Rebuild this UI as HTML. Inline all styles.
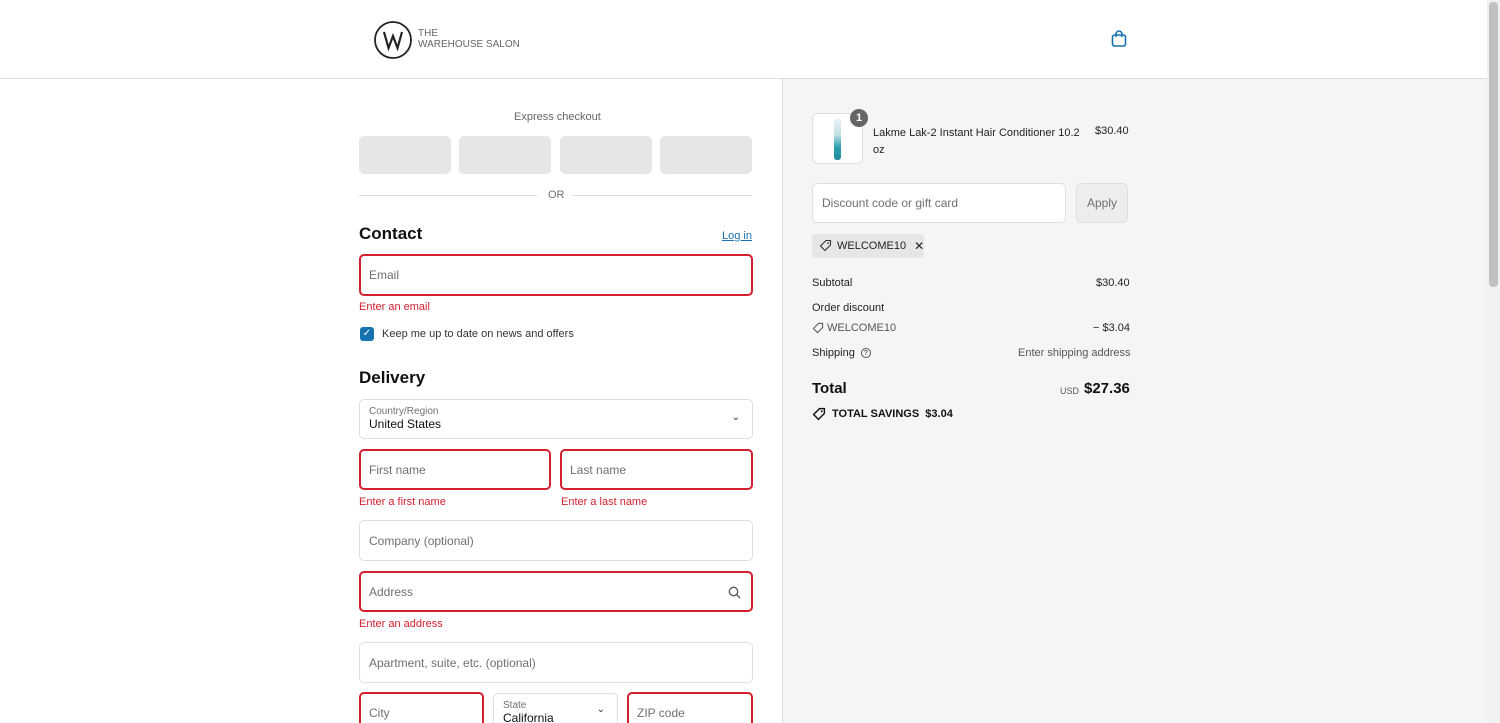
<!DOCTYPE html>
<html><head><meta charset="utf-8"><style>
*{box-sizing:border-box;margin:0;padding:0}
html,body{width:1500px;height:723px;overflow:hidden}
body{font-family:"Liberation Sans",sans-serif;background:#fff;color:#000;position:relative}
.a{position:absolute}
.hdr{left:0;top:0;width:1487px;height:79px;border-bottom:1px solid #dedede;background:#fff}
.right{left:782px;top:79px;width:705px;height:644px;background:#f5f5f5;border-left:1px solid #dedede}
.sb{left:1487px;top:0;width:13px;height:723px;background:#f1f1f1}
.sb div{position:absolute;left:2px;top:2px;width:9px;height:285px;background:#c1c1c1;border-radius:4px}
.in{position:absolute;border:1px solid #dedede;border-radius:5px;background:#fff;font-size:12px;color:#707070;padding-left:9px;display:flex;align-items:center;white-space:nowrap}
.err{border:2px solid #d2202f;padding-left:8px}
.em{position:absolute;font-size:11px;color:#d2202f}
.ex{position:absolute;top:136px;width:92px;height:38px;background:#e6e6e6;border-radius:5px}
.t{position:absolute;font-size:11px;color:#333;white-space:nowrap}
</style></head><body>
<div class="a hdr">
 <svg class="a" style="left:373px;top:20px" width="40" height="40" viewBox="0 0 40 40"><circle cx="20" cy="20" r="18" fill="none" stroke="#222" stroke-width="1.8"/><path d="M11 12 L15.5 28 L20 16 L24.5 28 L29 12" fill="none" stroke="#222" stroke-width="2.2"/></svg>
 <div class="a" style="left:418px;top:28px;font-size:10px;color:#666;line-height:11px">THE<br>WAREHOUSE SALON</div>
 <svg class="a" style="left:1110px;top:30px" width="18" height="18" viewBox="0 0 18 18"><rect x="2.5" y="5" width="13" height="11" rx="2" fill="none" stroke="#1773b0" stroke-width="1.6"/><path d="M6 7V4a3 3 0 016 0v3" fill="none" stroke="#1773b0" stroke-width="1.6"/></svg>
</div>
<div class="a right"></div>
<div class="a sb"><div></div></div>

<div class="t" style="left:514px;top:111px;color:#666">Express checkout</div>
<div class="ex" style="left:359px"></div><div class="ex" style="left:459px"></div><div class="ex" style="left:560px"></div><div class="ex" style="left:660px"></div>
<div class="a" style="left:359px;top:195px;width:178px;height:1px;background:#dedede"></div>
<div class="a" style="left:573px;top:195px;width:179px;height:1px;background:#dedede"></div>
<div class="t" style="left:548px;top:189px;color:#707070">OR</div>

<div class="a" style="left:359px;top:224px;font-size:17px;font-weight:bold;color:#111">Contact</div>
<div class="a" style="left:722px;top:230px;font-size:11px;color:#1773b0;text-decoration:underline">Log in</div>
<div class="in err" style="left:359px;top:254px;width:394px;height:42px">Email</div>
<div class="em" style="left:359px;top:301px">Enter an email</div>
<div class="a" style="left:360px;top:327px;width:14px;height:14px;background:#1773b0;border-radius:3px;color:#fff;font-size:10px;text-align:center;line-height:14px">✓</div>
<div class="t" style="left:382px;top:328px">Keep me up to date on news and offers</div>

<div class="a" style="left:359px;top:368px;font-size:17px;font-weight:bold;color:#111">Delivery</div>
<div class="in" style="left:359px;top:399px;width:394px;height:40px;display:block;padding-top:6px">
 <div style="font-size:10px;color:#707070">Country/Region</div><div style="font-size:12px;color:#111">United States</div>
 <div style="position:absolute;right:12px;top:12px;font-size:10px;color:#333">⌄</div></div>
<div class="in err" style="left:359px;top:449px;width:192px;height:41px">First name</div>
<div class="in err" style="left:560px;top:449px;width:193px;height:41px">Last name</div>
<div class="em" style="left:359px;top:496px">Enter a first name</div>
<div class="em" style="left:561px;top:496px">Enter a last name</div>
<div class="in" style="left:359px;top:520px;width:394px;height:41px">Company (optional)</div>
<div class="in err" style="left:359px;top:571px;width:394px;height:41px">Address
 <svg style="position:absolute;right:10px;top:13px" width="13" height="13" viewBox="0 0 13 13"><circle cx="5.5" cy="5.5" r="4.2" fill="none" stroke="#555" stroke-width="1.3"/><path d="M8.5 8.5L12 12" stroke="#555" stroke-width="1.3"/></svg></div>
<div class="em" style="left:359px;top:618px">Enter an address</div>
<div class="in" style="left:359px;top:642px;width:394px;height:41px">Apartment, suite, etc. (optional)</div>
<div class="in err" style="left:359px;top:692px;width:125px;height:42px">City</div>
<div class="in" style="left:493px;top:693px;width:125px;height:40px;display:block;padding-top:6px"><div style="font-size:10px">State</div><div style="color:#111">California</div><div style="position:absolute;right:12px;top:10px;font-size:10px;color:#333">⌄</div></div>
<div class="in err" style="left:627px;top:692px;width:126px;height:42px">ZIP code</div>

<div class="a" style="left:812px;top:113px;width:51px;height:51px;border:1px solid #dedede;border-radius:6px;background:#fff"></div>
<div class="a" style="left:834px;top:118px;width:7px;height:42px;border-radius:3px;background:linear-gradient(#f0f6f8 0%,#bfe0e6 40%,#2a9fb0 70%,#1a8a9c 100%)"></div>
<div class="a" style="left:850px;top:109px;width:18px;height:18px;border-radius:9px;background:#666;color:#fff;font-size:11px;font-weight:bold;text-align:center;line-height:18px">1</div>
<div class="a" style="left:873px;top:125px;width:210px;line-height:17px;color:#222;font-size:11px">Lakme Lak-2 Instant Hair Conditioner 10.2 oz</div>
<div class="t" style="left:1095px;top:125px;color:#222">$30.40</div>
<div class="in" style="left:812px;top:183px;width:254px;height:40px">Discount code or gift card</div>
<div class="a" style="left:1076px;top:183px;width:52px;height:40px;border:1px solid #dedede;border-radius:5px;background:#ededed;font-size:12px;color:#707070;text-align:center;line-height:38px">Apply</div>
<div class="a" style="left:812px;top:234px;width:112px;height:24px;background:#e6e6e6;border-radius:4px;font-size:11px;color:#222;padding-left:25px;display:flex;align-items:center;white-space:nowrap">WELCOME10<span style="margin-left:8px;font-size:12px">✕</span></div>
<svg class="a" style="left:819px;top:239px" width="13" height="13" viewBox="0 0 13 13"><path d="M7 1.5h4.5V6L6 11.5 1.5 7z" fill="none" stroke="#333" stroke-width="1.1"/><circle cx="9" cy="4" r=".9" fill="#333"/></svg>

<div class="t" style="left:812px;top:277px;color:#222">Subtotal</div><div class="t" style="left:1096px;top:277px;color:#222">$30.40</div>
<div class="t" style="left:812px;top:302px;color:#222">Order discount</div>
<svg class="a" style="left:812px;top:322px" width="12" height="12" viewBox="0 0 13 13"><path d="M7 1.5h4.5V6L6 11.5 1.5 7z" fill="none" stroke="#555" stroke-width="1.1"/></svg>
<div class="t" style="left:827px;top:322px;color:#555">WELCOME10</div><div class="t" style="left:1093px;top:322px;color:#222">− $3.04</div>
<div class="t" style="left:812px;top:347px;color:#222">Shipping <span style="display:inline-block;width:10px;height:10px;border:1px solid #555;border-radius:5px;font-size:7px;text-align:center;line-height:9px;margin-left:3px;vertical-align:middle">?</span></div>
<div class="t" style="left:1018px;top:347px;color:#555">Enter shipping address</div>
<div class="a" style="left:812px;top:380px;font-size:15px;font-weight:bold;color:#111">Total</div>
<div class="a" style="left:1060px;top:386px;font-size:9px;color:#555">USD</div>
<div class="a" style="left:1084px;top:380px;font-size:15px;font-weight:bold;color:#111">$27.36</div>
<svg class="a" style="left:812px;top:407px" width="14" height="14" viewBox="0 0 13 13"><path d="M7 1.5h4.5V6L6 11.5 1.5 7z" fill="none" stroke="#111" stroke-width="1.3"/><circle cx="9" cy="4" r=".9" fill="#111"/></svg>
<div class="a" style="left:832px;top:408px;font-size:11px;font-weight:bold;color:#111;white-space:nowrap">TOTAL SAVINGS &nbsp;$3.04</div>
</body></html>
